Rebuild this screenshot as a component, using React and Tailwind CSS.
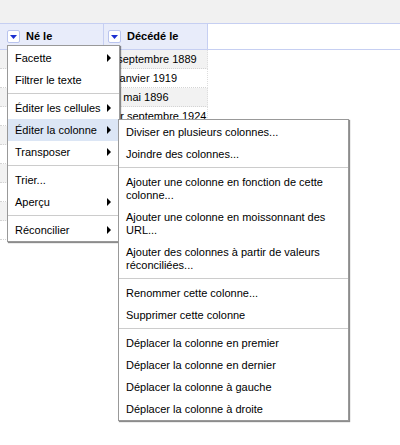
import React from 'react';

// la colonne "Né le" est cachée par le menu, on n'affiche que les décès
const deces = ['1 septembre 1889', '8 janvier 1919', '19 mai 1896', '1er septembre 1924', '', '', '', '', '', ''];

const mainMenu = [
  { label: 'Facette', sub: true },
  { label: 'Filtrer le texte' },
  'sep',
  { label: 'Éditer les cellules', sub: true },
  { label: 'Éditer la colonne', sub: true, active: true },
  { label: 'Transposer', sub: true },
  'sep',
  { label: 'Trier...' },
  { label: 'Aperçu', sub: true },
  'sep',
  { label: 'Réconcilier', sub: true },
];

const subMenu = [
  { label: 'Diviser en plusieurs colonnes...' },
  { label: 'Joindre des colonnes...' },
  'sep',
  { label: 'Ajouter une colonne en fonction de cette', line2: 'colonne...' },
  { label: 'Ajouter une colonne en moissonnant des', line2: 'URL...' },
  { label: 'Ajouter des colonnes à partir de valeurs', line2: 'réconciliées...' },
  'sep',
  { label: 'Renommer cette colonne...' },
  { label: 'Supprimer cette colonne' },
  'sep',
  { label: 'Déplacer la colonne en premier' },
  { label: 'Déplacer la colonne en dernier' },
  { label: 'Déplacer la colonne à gauche' },
  { label: 'Déplacer la colonne à droite' },
];

function DropButton() {
  return (
    <span className="w-[13px] h-[13px] bg-white border border-[#b9c4ee] rounded-[2px] flex items-center justify-center shrink-0">
      <svg width="7" height="4" viewBox="0 0 7 4">
        <polygon points="0,0 7,0 3.5,4" fill="#1b2fd0" />
      </svg>
    </span>
  );
}

function Arrow() {
  return <span className="w-0 h-0 border-y-[4px] border-y-transparent border-l-[4px] border-l-black" />;
}

function MenuList({ items }) {
  return items.map((it, i) => {
    if (it === 'sep') return <div key={i} className="mt-[2px] mb-[3px] h-px bg-[#cccccc]" />;
    if (it.line2) {
      return (
        <div key={i} className="pl-[7px] pr-[8px] pt-[5px] pb-[4px] leading-[13px]">
          <div>{it.label}</div>
          <div>{it.line2}</div>
        </div>
      );
    }
    return (
      <div
        key={i}
        className={`flex items-center justify-between pl-[7px] pr-[8px] py-[4px] leading-[14px] ${it.active ? 'bg-[#dce6f5]' : ''}`}
      >
        <span className="whitespace-nowrap">{it.label}</span>
        {it.sub && <Arrow />}
      </div>
    );
  });
}

export default function App() {
  return (
    <div className="relative w-[400px] h-[445px] overflow-hidden bg-white text-black text-[11px] font-['Liberation_Sans',Arial,sans-serif]">
      {/* barre du haut */}
      <div className="h-[24px] bg-[#f1f1f1] border-b border-[#c6cff2]" />

      {/* en-tête des colonnes */}
      <div className="flex h-[26px] border-b border-[#c6cff2]">
        <div className="w-[104px] bg-[#e8ecfa] border-r border-[#c6cff2] pl-[7px] flex items-center gap-[6px]">
          <DropButton />
          <span className="font-bold">Né le</span>
        </div>
        <div className="w-[104px] bg-[#e8ecfa] border-r border-[#c6cff2] pl-[4px] flex items-center gap-[6px]">
          <DropButton />
          <span className="font-bold">Décédé le</span>
        </div>
      </div>

      {/* lignes */}
      {deces.map((d, i) => (
        <div key={i} className="flex h-[19px]">
          <div className={`w-[104px] border-r border-[#dddddd] border-b border-b-[#d4d4d4] border-dotted ${i % 2 === 0 ? 'bg-[#f2f2f2]' : 'bg-white'}`} />
          <div className={`w-[104px] border-r border-[#dddddd] border-b border-b-[#d4d4d4] border-dotted pl-[4px] leading-[18px] whitespace-nowrap overflow-hidden ${i % 2 === 0 ? 'bg-[#f2f2f2]' : 'bg-white'}`}>
            {d}
          </div>
        </div>
      ))}

      {/* menu de la colonne */}
      <div className="absolute left-[7px] top-[45px] w-[113px] bg-white border border-[#999999] shadow-[1px_1px_1px_rgba(0,0,0,0.45)] pt-[1px]">
        <MenuList items={mainMenu} />
      </div>

      {/* sous-menu Éditer la colonne */}
      <div className="absolute left-[118px] top-[119px] w-[231px] bg-white border border-[#999999] shadow-[1px_1px_1px_rgba(0,0,0,0.45)] pt-[1px]">
        <MenuList items={subMenu} />
      </div>
    </div>
  );
}
